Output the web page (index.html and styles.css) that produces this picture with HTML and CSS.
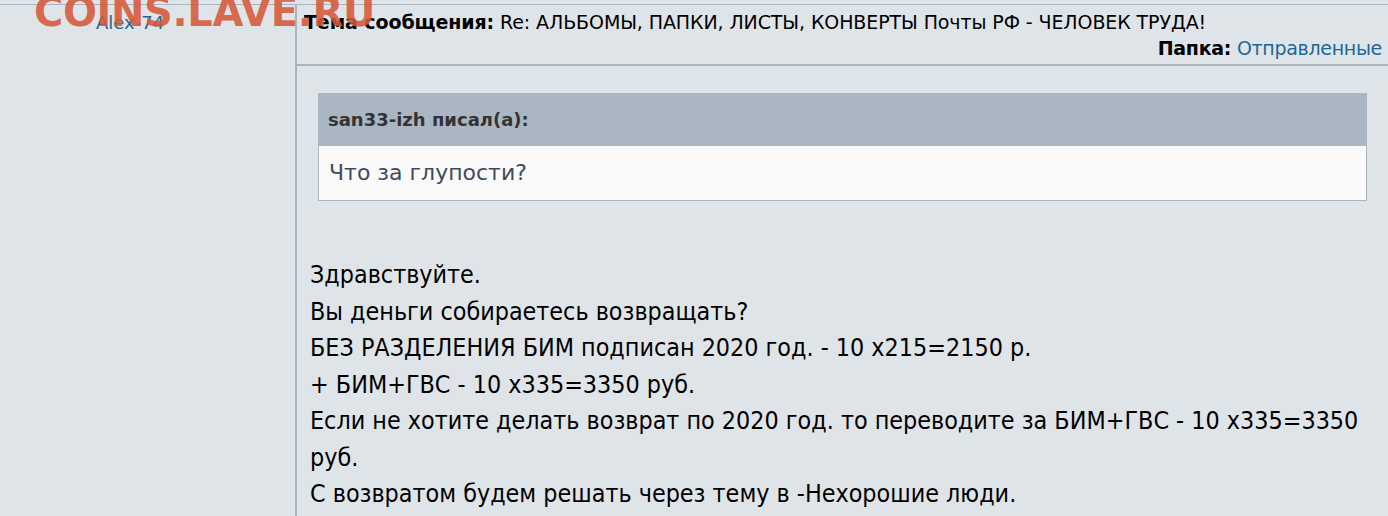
FILE: index.html
```html
<!DOCTYPE html>
<html lang="ru">

<head>
    <meta charset="utf-8">
    <meta name="viewport" content="width=device-width, initial-scale=1.0">
    <title>Личное сообщение</title>
    <link rel="stylesheet" href="styles.css">
</head>

<body>
    <div class="watermark">COINS.LAVE.RU</div>
    <section class="message">
        <div class="user">
            <a class="user_name" href="#">Alex-74</a>
        </div>
        <div class="content">
            <div class="info">
                <p class="topic"><b>Тема сообщения:</b> Re: АЛЬБОМЫ, ПАПКИ, ЛИСТЫ, КОНВЕРТЫ Почты РФ - ЧЕЛОВЕК ТРУДА!</p>
                <p class="folder"><b>Папка:</b> <a href="#">Отправленные</a></p>
            </div>
            <div class="text">
                <blockquote class="quote">
                    <div class="quote_top">san33-izh писал(а):</div>
                    <div class="quote_body">Что за глупости?</div>
                </blockquote>
                <p class="post">
                    Здравствуйте.<br>
                    Вы деньги собираетесь возвращать?<br>
                    БЕЗ РАЗДЕЛЕНИЯ БИМ подписан 2020 год. - 10 x215=2150 р.<br>
                    + БИМ+ГВС - 10 x335=3350 руб.<br>
                    Если не хотите делать возврат по 2020 год. то переводите за БИМ+ГВС - 10 x335=3350 руб.<br>
                    С возвратом будем решать через тему в -Нехорошие люди.
                </p>
            </div>
        </div>
    </section>
</body></html>
```

FILE: styles.css
```css
body {
    margin: 0;
    background-color: #dfe4e8;
    font-family: "DejaVu Sans", Tahoma, sans-serif;
    overflow: hidden;
}

a {
    color: #1d6796;
    text-decoration: none;
}

.watermark {
    position: absolute;
    left: 34px;
    top: -11px;
    font-family: "DejaVu Sans", sans-serif;
    font-weight: bold;
    font-size: 40px;
    letter-spacing: -.4px;
    color: rgba(214, 88, 56, .88);
}

.message {
    display: flex;
    margin-top: 4px;
    border-top: 1px solid #a9b5c1;
    min-height: 520px;
}

.user {
    width: 295px;
    border-right: 2px solid #a9b5c1;
    padding-top: 5px;
}

.user_name {
    display: block;
    padding-left: 96px;
    font-size: 18px;
    line-height: 26px;
}

.content {
    flex: 1;
}

.info {
    padding: 4px 6px 3px 7px;
    border-bottom: 2px solid #a9b5c1;
    font-size: 19px;
    color: #000;
}

.info p {
    margin: 0;
    line-height: 26px;
}

.topic {
    letter-spacing: -.1px;
}

.folder {
    text-align: right;
    letter-spacing: -.3px;
}

.text {
    padding: 27px 21px 20px 13px;
}

.quote {
    margin: 0 0 0 8px;
    border: 1px solid #a9b5c1;
    border-top: 0;
}

.quote_top {
    background-color: #aab7c3;
    height: 53px;
    line-height: 53px;
    padding-left: 9px;
    font-weight: bold;
    font-size: 18px;
    color: #333;
}

.quote_body {
    background-color: #fafafa;
    height: 54px;
    line-height: 54px;
    padding-left: 10px;
    font-size: 22px;
    color: #3e4b5e;
}

.post {
    margin: 56px 0 0;
    font-family: "DejaVu Sans Condensed", "DejaVu Sans", sans-serif;
    font-size: 24.85px;
    line-height: 36.5px;
    color: #000;
}
```
